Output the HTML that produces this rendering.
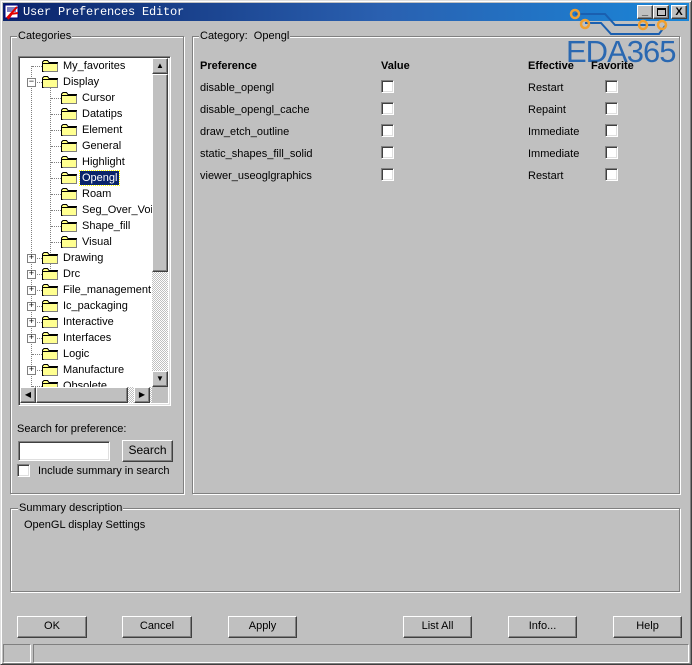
<!DOCTYPE html>
<html><head><meta charset="utf-8"><style>
*{margin:0;padding:0;box-sizing:border-box}
body{width:692px;height:665px;background:#c0c0c0;font-family:"Liberation Sans",sans-serif;font-size:11px;color:#000;position:relative;overflow:hidden}
.a{position:absolute}
.win{left:0;top:0;width:692px;height:665px;border-top:1px solid #dfdfdf;border-left:1px solid #dfdfdf;border-right:1px solid #404040;border-bottom:1px solid #404040;box-shadow:inset 1px 1px #fff,inset -1px -1px #808080}
.title{left:3px;top:3px;width:686px;height:18px;background:linear-gradient(90deg,#0a246a 0%,#2a60b0 55%,#1a86d8 100%)}
.grp{border:1px solid #808080;box-shadow:1px 1px #fff,inset 1px 1px #fff}
.lbl{background:#c0c0c0;padding:0 1px;line-height:13px}
.sunk{border-top:1px solid #808080;border-left:1px solid #808080;border-right:1px solid #fff;border-bottom:1px solid #fff;box-shadow:inset 1px 1px #404040,inset -1px -1px #dfdfdf}
.btn{background:#c0c0c0;border-top:1px solid #fff;border-left:1px solid #fff;border-right:1px solid #404040;border-bottom:1px solid #404040;box-shadow:inset -1px -1px #808080;text-align:center;line-height:19px}
.cb{width:13px;height:13px;background:#fff;border-top:1px solid #808080;border-left:1px solid #808080;border-right:1px solid #fff;border-bottom:1px solid #fff;box-shadow:inset 1px 1px #404040,inset -1px -1px #dfdfdf}
.fo{width:16px;height:12px}
.t{line-height:16px;white-space:nowrap}
.dv{border-left:1px dotted #808080}
.dh{border-top:1px dotted #808080}
.px{width:9px;height:9px;border:1px solid #808080;background:#fff;font-size:9px;line-height:7px;text-align:center;font-family:"Liberation Mono",monospace}
.hatch{background-image:repeating-conic-gradient(#fff 0 25%,#c0c0c0 0 50%);background-size:2px 2px}
</style></head><body>
<div class="a win"></div>
<div class="a title"></div>
<svg class="a" style="left:4px;top:4px" width="16" height="16"><rect x="1" y="1" width="13" height="13" fill="#fff" stroke="#000080"/><rect x="3" y="3" width="9" height="5" fill="#8080c0"/><path d="M3 14 L13 3 M6 10 L14 9 M4 15 L9 8" stroke="#e00000" stroke-width="2" fill="none"/></svg>
<div class="a t" style="left:23px;top:4px;color:#fff;font-family:'Liberation Mono',monospace;font-size:12px;letter-spacing:-0.2px">User Preferences Editor</div>
<div class="a btn" style="left:637px;top:5px;width:16px;height:14px;line-height:10px;font-weight:bold">_</div>
<div class="a btn" style="left:653px;top:5px;width:16px;height:14px"><div class="a" style="left:3px;top:2px;width:9px;height:8px;border:1px solid #000;border-top-width:2px"></div></div>
<div class="a btn" style="left:671px;top:5px;width:16px;height:14px;line-height:12px;font-weight:bold;font-size:11px">X</div>

<svg class="a" style="left:565px;top:8px" width="110" height="28"><path d="M10 6 H40 L50 17 H90 M20 15 H36 L46 26 H94 L100 18" stroke="#1a5fb0" stroke-width="2" fill="none"/><circle cx="10" cy="6" r="4" fill="none" stroke="#f0a030" stroke-width="2.5"/><circle cx="20" cy="16" r="4" fill="none" stroke="#f0a030" stroke-width="2.5"/><circle cx="78" cy="17" r="4" fill="none" stroke="#f0a030" stroke-width="2.5"/><circle cx="97" cy="17" r="4" fill="none" stroke="#f0a030" stroke-width="2.5"/></svg>

<div class="a grp" style="left:10px;top:36px;width:174px;height:458px"></div>
<div class="a lbl" style="left:17px;top:30px">Categories</div>
<div class="a sunk" style="left:18px;top:56px;width:153px;height:350px;background:#fff"></div>
<div class="a" style="left:20px;top:58px;width:132px;height:329px;overflow:hidden">
<div class="a dv" style="left:11px;top:8px;height:325px"></div>
<div class="a dv" style="left:30px;top:30px;height:185px"></div>
</div>
<div class="a hatch" style="left:152px;top:58px;width:16px;height:329px"></div>
<div class="a btn" style="left:152px;top:58px;width:16px;height:16px;font-size:8px;line-height:14px">▲</div>
<div class="a btn" style="left:152px;top:74px;width:16px;height:198px"></div>
<div class="a btn" style="left:152px;top:371px;width:16px;height:16px;font-size:8px;line-height:14px">▼</div>
<div class="a hatch" style="left:20px;top:387px;width:132px;height:16px"></div>
<div class="a btn" style="left:20px;top:387px;width:16px;height:16px;font-size:8px;line-height:14px">◀</div>
<div class="a btn" style="left:36px;top:387px;width:92px;height:16px"></div>
<div class="a btn" style="left:134px;top:387px;width:16px;height:16px;font-size:8px;line-height:14px">▶</div>
<div class="a" style="left:152px;top:387px;width:16px;height:16px;background:#c0c0c0"></div>

<div class="a t" style="left:17px;top:421px">Search for preference:</div>
<div class="a sunk" style="left:18px;top:441px;width:92px;height:20px;background:#fff"></div>
<div class="a btn" style="left:122px;top:440px;width:51px;height:22px;font-size:12px">Search</div>
<div class="a cb" style="left:17px;top:464px"></div>
<div class="a t" style="left:38px;top:463px">Include summary in search</div>

<div class="a grp" style="left:192px;top:36px;width:488px;height:458px"></div>
<div class="a lbl" style="left:199px;top:30px">Category:&nbsp; Opengl</div>
<div class="a" style="left:566px;top:35px;font-size:31px;color:#1a5fb0;line-height:34px;letter-spacing:-1px;opacity:.9">EDA365</div>
<div class="a t" style="left:200px;top:58px;font-weight:bold">Preference</div>
<div class="a t" style="left:381px;top:58px;font-weight:bold">Value</div>
<div class="a t" style="left:528px;top:58px;font-weight:bold">Effective</div>
<div class="a t" style="left:591px;top:58px;font-weight:bold">Favorite</div>

<div class="a t" style="left:200px;top:80px">disable_opengl</div><div class="a cb" style="left:381px;top:80px"></div><div class="a t" style="left:528px;top:80px">Restart</div><div class="a cb" style="left:605px;top:80px"></div>
<div class="a t" style="left:200px;top:102px">disable_opengl_cache</div><div class="a cb" style="left:381px;top:102px"></div><div class="a t" style="left:528px;top:102px">Repaint</div><div class="a cb" style="left:605px;top:102px"></div>
<div class="a t" style="left:200px;top:124px">draw_etch_outline</div><div class="a cb" style="left:381px;top:124px"></div><div class="a t" style="left:528px;top:124px">Immediate</div><div class="a cb" style="left:605px;top:124px"></div>
<div class="a t" style="left:200px;top:146px">static_shapes_fill_solid</div><div class="a cb" style="left:381px;top:146px"></div><div class="a t" style="left:528px;top:146px">Immediate</div><div class="a cb" style="left:605px;top:146px"></div>
<div class="a t" style="left:200px;top:168px">viewer_useoglgraphics</div><div class="a cb" style="left:381px;top:168px"></div><div class="a t" style="left:528px;top:168px">Restart</div><div class="a cb" style="left:605px;top:168px"></div>

<div class="a grp" style="left:10px;top:508px;width:670px;height:84px"></div>
<div class="a lbl" style="left:18px;top:502px">Summary description</div>
<div class="a t" style="left:24px;top:517px">OpenGL display Settings</div>

<div class="a btn" style="left:17px;top:616px;width:70px;height:22px">OK</div>
<div class="a btn" style="left:122px;top:616px;width:70px;height:22px">Cancel</div>
<div class="a btn" style="left:228px;top:616px;width:69px;height:22px">Apply</div>
<div class="a btn" style="left:403px;top:616px;width:69px;height:22px">List All</div>
<div class="a btn" style="left:508px;top:616px;width:69px;height:22px">Info...</div>
<div class="a btn" style="left:613px;top:616px;width:69px;height:22px">Help</div>

<div class="a" style="left:3px;top:644px;width:28px;height:19px;border-top:1px solid #808080;border-left:1px solid #808080;border-right:1px solid #fff;border-bottom:1px solid #fff"></div>
<div class="a" style="left:33px;top:644px;width:656px;height:19px;border-top:1px solid #808080;border-left:1px solid #808080;border-right:1px solid #fff;border-bottom:1px solid #fff"></div>

<div class="a" style="left:0;top:0;width:152px;height:387px;overflow:hidden;clip-path:inset(58px 0 0 20px)">
<svg width="0" height="0" style="position:absolute"><defs><g id="f"><path d="M0.5 3.5 V11.5 H15.5 V2.5 H7 L5.5 0.5 H2 L0.5 2 Z" fill="#ffff80" stroke="#000"/><rect x="1" y="4" width="14" height="7" fill="#ffff90"/><path d="M1 3.5 H15" stroke="#000"/><path d="M1.5 11.5 H15.5 V3.5" stroke="#808080" fill="none"/></g></defs></svg>
<div class="a dh" style="left:32px;top:66px;width:10px"></div><svg class="a fo" style="left:42px;top:60px"><use href="#f"/></svg><div class="a t" style="left:63px;top:58px">My_favorites</div>
<div class="a dh" style="left:32px;top:82px;width:10px"></div><div class="a px" style="left:27px;top:78px">−</div><svg class="a fo" style="left:42px;top:76px"><use href="#f"/></svg><div class="a t" style="left:63px;top:74px">Display</div>
<div class="a dh" style="left:51px;top:98px;width:10px"></div><svg class="a fo" style="left:61px;top:92px"><use href="#f"/></svg><div class="a t" style="left:82px;top:90px">Cursor</div>
<div class="a dh" style="left:51px;top:114px;width:10px"></div><svg class="a fo" style="left:61px;top:108px"><use href="#f"/></svg><div class="a t" style="left:82px;top:106px">Datatips</div>
<div class="a dh" style="left:51px;top:130px;width:10px"></div><svg class="a fo" style="left:61px;top:124px"><use href="#f"/></svg><div class="a t" style="left:82px;top:122px">Element</div>
<div class="a dh" style="left:51px;top:146px;width:10px"></div><svg class="a fo" style="left:61px;top:140px"><use href="#f"/></svg><div class="a t" style="left:82px;top:138px">General</div>
<div class="a dh" style="left:51px;top:162px;width:10px"></div><svg class="a fo" style="left:61px;top:156px"><use href="#f"/></svg><div class="a t" style="left:82px;top:154px">Highlight</div>
<div class="a dh" style="left:51px;top:178px;width:10px"></div><svg class="a fo" style="left:61px;top:172px"><use href="#f"/></svg><div class="a t" style="left:80px;top:171px;line-height:14px;background:#0a246a;color:#fff;padding:0 2px;outline:1px dotted #ff0">Opengl</div>
<div class="a dh" style="left:51px;top:194px;width:10px"></div><svg class="a fo" style="left:61px;top:188px"><use href="#f"/></svg><div class="a t" style="left:82px;top:186px">Roam</div>
<div class="a dh" style="left:51px;top:210px;width:10px"></div><svg class="a fo" style="left:61px;top:204px"><use href="#f"/></svg><div class="a t" style="left:82px;top:202px">Seg_Over_Voids</div>
<div class="a dh" style="left:51px;top:226px;width:10px"></div><svg class="a fo" style="left:61px;top:220px"><use href="#f"/></svg><div class="a t" style="left:82px;top:218px">Shape_fill</div>
<div class="a dh" style="left:51px;top:242px;width:10px"></div><svg class="a fo" style="left:61px;top:236px"><use href="#f"/></svg><div class="a t" style="left:82px;top:234px">Visual</div>
<div class="a dh" style="left:32px;top:258px;width:10px"></div><div class="a px" style="left:27px;top:254px">+</div><svg class="a fo" style="left:42px;top:252px"><use href="#f"/></svg><div class="a t" style="left:63px;top:250px">Drawing</div>
<div class="a dh" style="left:32px;top:274px;width:10px"></div><div class="a px" style="left:27px;top:270px">+</div><svg class="a fo" style="left:42px;top:268px"><use href="#f"/></svg><div class="a t" style="left:63px;top:266px">Drc</div>
<div class="a dh" style="left:32px;top:290px;width:10px"></div><div class="a px" style="left:27px;top:286px">+</div><svg class="a fo" style="left:42px;top:284px"><use href="#f"/></svg><div class="a t" style="left:63px;top:282px">File_management</div>
<div class="a dh" style="left:32px;top:306px;width:10px"></div><div class="a px" style="left:27px;top:302px">+</div><svg class="a fo" style="left:42px;top:300px"><use href="#f"/></svg><div class="a t" style="left:63px;top:298px">Ic_packaging</div>
<div class="a dh" style="left:32px;top:322px;width:10px"></div><div class="a px" style="left:27px;top:318px">+</div><svg class="a fo" style="left:42px;top:316px"><use href="#f"/></svg><div class="a t" style="left:63px;top:314px">Interactive</div>
<div class="a dh" style="left:32px;top:338px;width:10px"></div><div class="a px" style="left:27px;top:334px">+</div><svg class="a fo" style="left:42px;top:332px"><use href="#f"/></svg><div class="a t" style="left:63px;top:330px">Interfaces</div>
<div class="a dh" style="left:32px;top:354px;width:10px"></div><svg class="a fo" style="left:42px;top:348px"><use href="#f"/></svg><div class="a t" style="left:63px;top:346px">Logic</div>
<div class="a dh" style="left:32px;top:370px;width:10px"></div><div class="a px" style="left:27px;top:366px">+</div><svg class="a fo" style="left:42px;top:364px"><use href="#f"/></svg><div class="a t" style="left:63px;top:362px">Manufacture</div>
<div class="a dh" style="left:32px;top:386px;width:10px"></div><svg class="a fo" style="left:42px;top:380px"><use href="#f"/></svg><div class="a t" style="left:63px;top:378px">Obsolete</div>
</div>
</body></html>
